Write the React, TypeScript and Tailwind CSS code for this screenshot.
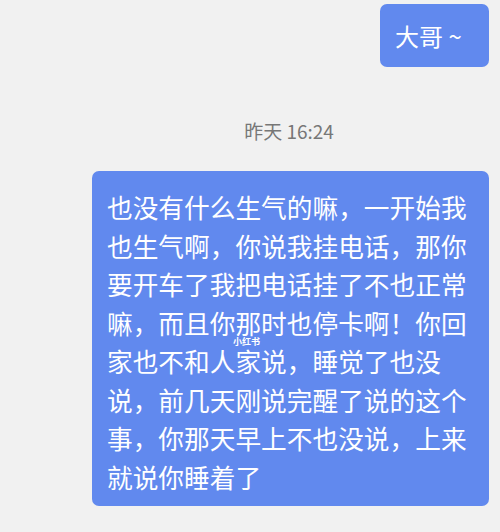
export default function App() {
  const font = { fontFamily: '"Noto Sans CJK SC", "Noto Sans", sans-serif' };
  return (
    <div className="w-[500px] h-[532px] bg-[#f1f1f1] overflow-hidden relative" style={font}>
      <div className="flex justify-end pr-[11px] pt-[4px]">
        <div className="w-[109px] h-[63px] rounded-[7px] bg-[#6189ee] text-white text-[24px] flex items-center pl-[15px]">
          大哥 ~
        </div>
      </div>
      <div className="flex justify-center pt-[51px] pl-[78px]">
        <span className="text-[19px] text-[#777777] leading-[26px]">昨天 16:24</span>
      </div>
      <div className="flex justify-end pr-[11px] pt-[27px]">
        <div className="w-[397px] h-[335px] rounded-[7px] bg-[#6189ee] text-white text-[25.7px] leading-[38.5px] pl-[15px] pr-[10px] pt-[17px] relative">
          也没有什么生气的嘛，一开始我也生气啊，你说我挂电话，那你要开车了我把电话挂了不也正常嘛，而且你那时也停卡啊！你回家也不和人家说，睡觉了也没说，前几天刚说完醒了说的这个事，你那天早上不也没说，上来就说你睡着了
          <span className="absolute left-[141px] top-[166px] text-[9px] leading-[10px] font-bold text-white">小红书</span>
        </div>
      </div>
    </div>
  );
}
